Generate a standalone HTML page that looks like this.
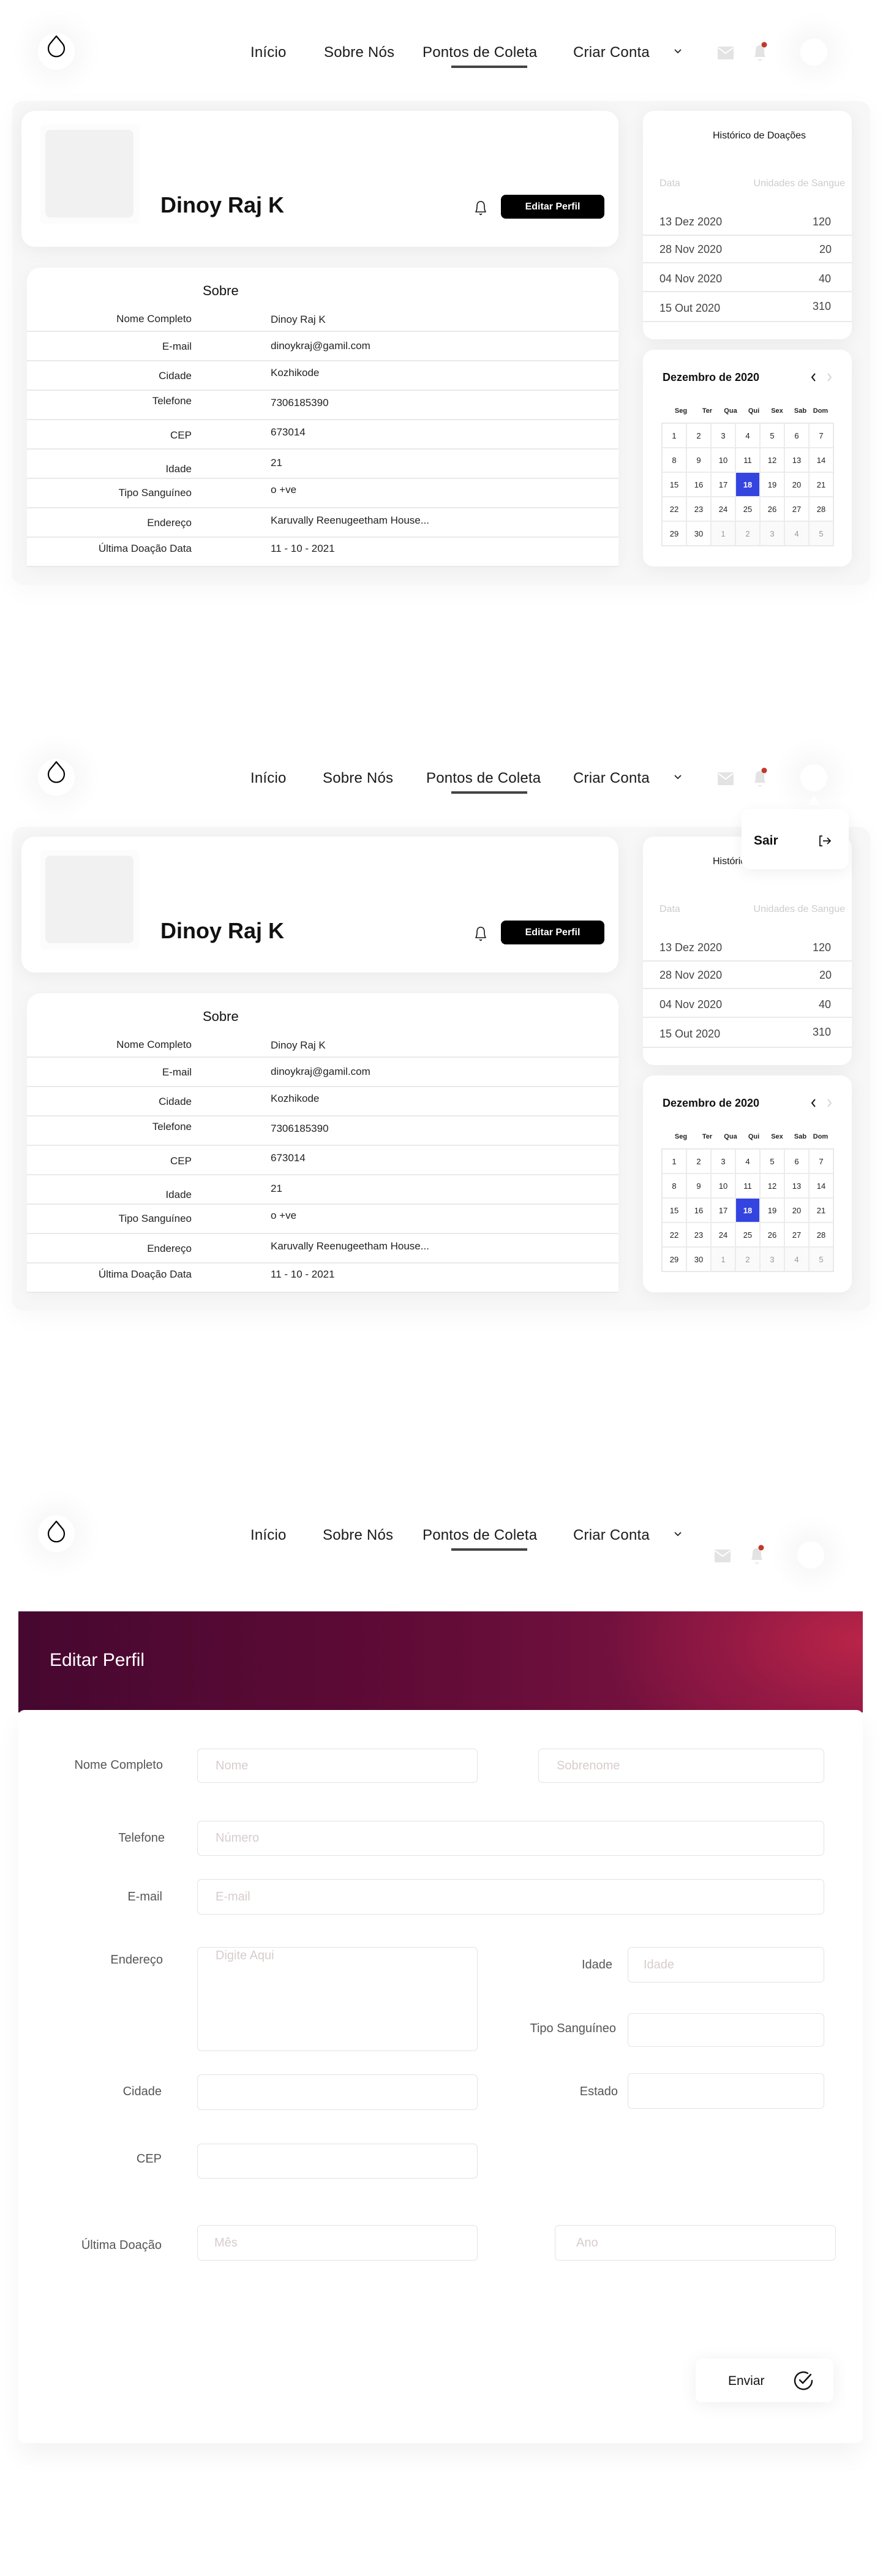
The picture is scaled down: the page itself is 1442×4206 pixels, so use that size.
<!DOCTYPE html>
<html><head><meta charset="utf-8">
<style>
*{box-sizing:border-box;margin:0;padding:0}
body{width:1442px;height:4206px;background:#fff;position:relative;font-family:"Liberation Sans",sans-serif;overflow:hidden;color:#111}
.a{position:absolute}
.sec{position:absolute;left:0;width:1442px;height:1000px}
.logo{left:62px;top:54px;width:60px;height:60px;border-radius:50%;background:#fff;box-shadow:0 0 40px 18px rgba(0,0,0,0.035)}
.nav{font-size:24px;letter-spacing:0.2px;color:#1a1a1a;top:72px;white-space:nowrap}
.ul{left:737px;top:107px;width:124px;height:4px;background:#444}
.av{width:44px;height:44px;border-radius:50%;background:#fff;box-shadow:0 0 40px 20px rgba(0,0,0,0.035)}
.outer{left:20px;top:165px;width:1401px;height:790px;background:#f7f7f7;border-radius:18px;box-shadow:0 10px 40px rgba(0,0,0,0.03)}
.card{background:#fff;border-radius:22px;box-shadow:0 4px 30px rgba(0,0,0,0.06)}
.lbl{font-size:17px;color:#222;text-align:right;width:300px;left:13px;line-height:20px}
.val{font-size:17px;color:#222;left:442px;line-height:20px;white-space:nowrap}
.dv{left:44px;width:966px;height:2px;background:#e9e9e9}
.hr{font-size:18px;color:#444;line-height:20px}
.hd{left:1050px;width:341px;height:2px;background:#e9e9e9}
.wd{font-size:11px;font-weight:bold;color:#222;top:665px;width:40px;text-align:center}
.grid{left:1080px;top:690px;display:grid;grid-template-columns:repeat(7,40px);grid-auto-rows:40px;border:1px solid #e6e6e6}
.grid div{border:1px solid #ececec;font-size:13px;display:flex;align-items:center;justify-content:center;color:#222}
.grid .o{color:#999;background:#fafafa}
.grid .s{background:#3344e0;color:#fff;font-weight:bold}
.fl{font-size:20px;color:#555;text-align:right;line-height:24px}
.in{border:1.5px solid #e2e2e2;border-radius:7px;background:#fff;font-size:20px;color:#d8cccc;padding-left:29px;display:flex;align-items:center}
</style></head><body>

<div class="sec" style="top:0">
 <div class="a logo"></div>
 <svg class="a" style="left:76px;top:57px" width="32" height="40" viewBox="0 0 32 40"><path d="M16 2 L6 14 A13 13 0 1 0 26 14 Z" fill="none" stroke="#000" stroke-width="2.2" stroke-linejoin="round"/></svg>
 <div class="a nav" style="left:409px">Início</div>
 <div class="a nav" style="left:529px">Sobre Nós</div>
 <div class="a nav" style="left:690px">Pontos de Coleta</div>
 <div class="a nav" style="left:936px">Criar Conta</div>
 <svg class="a" style="left:1101px;top:80px" width="12" height="8" viewBox="0 0 12 8"><path d="M1 1l5 5 5-5" fill="none" stroke="#222" stroke-width="1.8"/></svg>
 <div class="a ul"></div>
 <svg class="a" style="left:1172px;top:76px" width="26" height="21" viewBox="0 0 26 21"><rect width="26" height="21" rx="2" fill="#e3e3e3"/><path d="M1 2l12 9 12-9" fill="none" stroke="#fff" stroke-width="2"/></svg>
 <svg class="a" style="left:1229px;top:68px" width="26" height="34" viewBox="0 0 26 34"><path d="M3 25 Q5 22 5 14 Q5 6 12 6 Q19 6 19 14 Q19 22 21 25 Z" fill="#e3e3e3"/><path d="M9 29 L12 31 L15 29" stroke="#e3e3e3" stroke-width="1.5" fill="none"/><circle cx="19" cy="5" r="4.5" fill="#c0392b"/></svg>
 <div class="a av" style="left:1307px;top:63px"></div>

 <div class="a outer"></div>
 <div class="a card" style="left:35px;top:181px;width:975px;height:222px"></div>
 <div class="a" style="left:66px;top:203px;width:162px;height:162px;background:#fcfcfc;border-radius:6px"></div>
 <div class="a" style="left:74px;top:212px;width:144px;height:143px;background:#f1f1f1;border-radius:8px"></div>
 <div class="a" style="left:262px;top:315px;font-size:36px;font-weight:bold;line-height:40px">Dinoy Raj K</div>
 <svg class="a" style="left:774px;top:326px" width="22" height="26" viewBox="0 0 22 26"><path d="M3 20 Q5 17 5 11 Q5 3 11 3 Q17 3 17 11 Q17 17 19 20 Z" fill="none" stroke="#111" stroke-width="1.6" stroke-linejoin="round"/><path d="M9 23 L11 24.5 L13 23" stroke="#111" stroke-width="1.6" fill="none"/></svg>
 <div class="a" style="left:818px;top:318px;width:169px;height:39px;background:#000;border-radius:8px;color:#fff;font-weight:bold;font-size:16px;display:flex;align-items:center;justify-content:center">Editar Perfil</div>

 <div class="a card" style="left:44px;top:437px;width:966px;height:488px;border-radius:22px 22px 0 0;box-shadow:0 4px 30px rgba(0,0,0,0.04)"></div>
 <div class="a" style="left:331px;top:462px;font-size:22px;line-height:26px">Sobre</div>
 <div class="a lbl" style="top:511px">Nome Completo</div><div class="a val" style="top:512px">Dinoy Raj K</div>
 <div class="a dv" style="top:540px"></div>
 <div class="a lbl" style="top:556px">E-mail</div><div class="a val" style="top:555px">dinoykraj@gamil.com</div>
 <div class="a dv" style="top:588px"></div>
 <div class="a lbl" style="top:604px">Cidade</div><div class="a val" style="top:599px">Kozhikode</div>
 <div class="a dv" style="top:636px"></div>
 <div class="a lbl" style="top:645px">Telefone</div><div class="a val" style="top:648px">7306185390</div>
 <div class="a dv" style="top:684px"></div>
 <div class="a lbl" style="top:701px">CEP</div><div class="a val" style="top:696px">673014</div>
 <div class="a dv" style="top:732px"></div>
 <div class="a lbl" style="top:756px">Idade</div><div class="a val" style="top:746px">21</div>
 <div class="a dv" style="top:780px"></div>
 <div class="a lbl" style="top:795px">Tipo Sanguíneo</div><div class="a val" style="top:790px">o +ve</div>
 <div class="a dv" style="top:828px"></div>
 <div class="a lbl" style="top:844px">Endereço</div><div class="a val" style="top:840px">Karuvally Reenugeetham House...</div>
 <div class="a dv" style="top:876px"></div>
 <div class="a lbl" style="top:886px">Última Doação Data</div><div class="a val" style="top:886px">11 - 10 - 2021</div>
 <div class="a dv" style="top:924px"></div>

 <div class="a card" style="left:1050px;top:181px;width:341px;height:373px;border-radius:18px"></div>
 <div class="a" style="left:1050px;top:213px;width:380px;text-align:center;font-size:16px;color:#111">Histórico de Doações</div>
 <div class="a" style="left:1077px;top:291px;font-size:16px;color:#ccc">Data</div>
 <div class="a" style="left:1180px;top:291px;width:200px;text-align:right;font-size:16px;color:#ccc">Unidades de Sangue</div>
 <div class="a hr" style="left:1077px;top:352px">13 Dez 2020</div><div class="a hr" style="left:1257px;width:100px;text-align:right;top:352px">120</div>
 <div class="a hd" style="top:383px"></div>
 <div class="a hr" style="left:1077px;top:397px">28 Nov 2020</div><div class="a hr" style="left:1258px;width:100px;text-align:right;top:397px">20</div>
 <div class="a hd" style="top:428px"></div>
 <div class="a hr" style="left:1077px;top:445px">04 Nov 2020</div><div class="a hr" style="left:1257px;width:100px;text-align:right;top:445px">40</div>
 <div class="a hd" style="top:475px"></div>
 <div class="a hr" style="left:1077px;top:493px">15 Out 2020</div><div class="a hr" style="left:1257px;width:100px;text-align:right;top:490px">310</div>
 <div class="a hd" style="top:524px"></div>

 <div class="a card" style="left:1050px;top:571px;width:341px;height:354px;border-radius:18px"></div>
 <div class="a" style="left:1082px;top:606px;font-size:18px;font-weight:bold">Dezembro de 2020</div>
 <svg class="a" style="left:1324px;top:608px" width="10" height="16" viewBox="0 0 10 16"><path d="M7 2L2 8l5 6" fill="none" stroke="#111" stroke-width="2"/></svg>
 <svg class="a" style="left:1349px;top:608px" width="10" height="16" viewBox="0 0 10 16"><path d="M3 2l5 6-5 6" fill="none" stroke="#ccc" stroke-width="1.6"/></svg>
 <div class="a wd" style="left:1092px">Seg</div><div class="a wd" style="left:1135px">Ter</div><div class="a wd" style="left:1173px">Qua</div><div class="a wd" style="left:1211px">Qui</div><div class="a wd" style="left:1249px">Sex</div><div class="a wd" style="left:1287px">Sab</div><div class="a wd" style="left:1320px">Dom</div>
 <div class="a grid">
  <div>1</div><div>2</div><div>3</div><div>4</div><div>5</div><div>6</div><div>7</div>
  <div>8</div><div>9</div><div>10</div><div>11</div><div>12</div><div>13</div><div>14</div>
  <div>15</div><div>16</div><div>17</div><div class="s">18</div><div>19</div><div>20</div><div>21</div>
  <div>22</div><div>23</div><div>24</div><div>25</div><div>26</div><div>27</div><div>28</div>
  <div>29</div><div>30</div><div class="o">1</div><div class="o">2</div><div class="o">3</div><div class="o">4</div><div class="o">5</div>
 </div>
</div>

<div class="sec" style="top:1185px">
 <div class="a logo"></div>
 <svg class="a" style="left:76px;top:57px" width="32" height="40" viewBox="0 0 32 40"><path d="M16 2 L6 14 A13 13 0 1 0 26 14 Z" fill="none" stroke="#000" stroke-width="2.2" stroke-linejoin="round"/></svg>
 <div class="a nav" style="left:409px">Início</div>
 <div class="a nav" style="left:527px">Sobre Nós</div>
 <div class="a nav" style="left:696px">Pontos de Coleta</div>
 <div class="a nav" style="left:936px">Criar Conta</div>
 <svg class="a" style="left:1101px;top:80px" width="12" height="8" viewBox="0 0 12 8"><path d="M1 1l5 5 5-5" fill="none" stroke="#222" stroke-width="1.8"/></svg>
 <div class="a ul"></div>
 <svg class="a" style="left:1172px;top:76px" width="26" height="21" viewBox="0 0 26 21"><rect width="26" height="21" rx="2" fill="#e3e3e3"/><path d="M1 2l12 9 12-9" fill="none" stroke="#fff" stroke-width="2"/></svg>
 <svg class="a" style="left:1229px;top:68px" width="26" height="34" viewBox="0 0 26 34"><path d="M3 25 Q5 22 5 14 Q5 6 12 6 Q19 6 19 14 Q19 22 21 25 Z" fill="#e3e3e3"/><path d="M9 29 L12 31 L15 29" stroke="#e3e3e3" stroke-width="1.5" fill="none"/><circle cx="19" cy="5" r="4.5" fill="#c0392b"/></svg>
 <div class="a av" style="left:1307px;top:63px"></div>

 <div class="a outer"></div>
 <div class="a card" style="left:35px;top:181px;width:975px;height:222px"></div>
 <div class="a" style="left:66px;top:203px;width:162px;height:162px;background:#fcfcfc;border-radius:6px"></div>
 <div class="a" style="left:74px;top:212px;width:144px;height:143px;background:#f1f1f1;border-radius:8px"></div>
 <div class="a" style="left:262px;top:315px;font-size:36px;font-weight:bold;line-height:40px">Dinoy Raj K</div>
 <svg class="a" style="left:774px;top:326px" width="22" height="26" viewBox="0 0 22 26"><path d="M3 20 Q5 17 5 11 Q5 3 11 3 Q17 3 17 11 Q17 17 19 20 Z" fill="none" stroke="#111" stroke-width="1.6" stroke-linejoin="round"/><path d="M9 23 L11 24.5 L13 23" stroke="#111" stroke-width="1.6" fill="none"/></svg>
 <div class="a" style="left:818px;top:318px;width:169px;height:39px;background:#000;border-radius:8px;color:#fff;font-weight:bold;font-size:16px;display:flex;align-items:center;justify-content:center">Editar Perfil</div>

 <div class="a card" style="left:44px;top:437px;width:966px;height:488px;border-radius:22px 22px 0 0;box-shadow:0 4px 30px rgba(0,0,0,0.04)"></div>
 <div class="a" style="left:331px;top:462px;font-size:22px;line-height:26px">Sobre</div>
 <div class="a lbl" style="top:511px">Nome Completo</div><div class="a val" style="top:512px">Dinoy Raj K</div>
 <div class="a dv" style="top:540px"></div>
 <div class="a lbl" style="top:556px">E-mail</div><div class="a val" style="top:555px">dinoykraj@gamil.com</div>
 <div class="a dv" style="top:588px"></div>
 <div class="a lbl" style="top:604px">Cidade</div><div class="a val" style="top:599px">Kozhikode</div>
 <div class="a dv" style="top:636px"></div>
 <div class="a lbl" style="top:645px">Telefone</div><div class="a val" style="top:648px">7306185390</div>
 <div class="a dv" style="top:684px"></div>
 <div class="a lbl" style="top:701px">CEP</div><div class="a val" style="top:696px">673014</div>
 <div class="a dv" style="top:732px"></div>
 <div class="a lbl" style="top:756px">Idade</div><div class="a val" style="top:746px">21</div>
 <div class="a dv" style="top:780px"></div>
 <div class="a lbl" style="top:795px">Tipo Sanguíneo</div><div class="a val" style="top:790px">o +ve</div>
 <div class="a dv" style="top:828px"></div>
 <div class="a lbl" style="top:844px">Endereço</div><div class="a val" style="top:840px">Karuvally Reenugeetham House...</div>
 <div class="a dv" style="top:876px"></div>
 <div class="a lbl" style="top:886px">Última Doação Data</div><div class="a val" style="top:886px">11 - 10 - 2021</div>
 <div class="a dv" style="top:924px"></div>

 <div class="a card" style="left:1050px;top:181px;width:341px;height:373px;border-radius:18px"></div>
 <div class="a" style="left:1050px;top:213px;width:380px;text-align:center;font-size:16px;color:#111">Histórico de Doações</div>
 <div class="a" style="left:1077px;top:291px;font-size:16px;color:#ccc">Data</div>
 <div class="a" style="left:1180px;top:291px;width:200px;text-align:right;font-size:16px;color:#ccc">Unidades de Sangue</div>
 <div class="a hr" style="left:1077px;top:352px">13 Dez 2020</div><div class="a hr" style="left:1257px;width:100px;text-align:right;top:352px">120</div>
 <div class="a hd" style="top:383px"></div>
 <div class="a hr" style="left:1077px;top:397px">28 Nov 2020</div><div class="a hr" style="left:1258px;width:100px;text-align:right;top:397px">20</div>
 <div class="a hd" style="top:428px"></div>
 <div class="a hr" style="left:1077px;top:445px">04 Nov 2020</div><div class="a hr" style="left:1257px;width:100px;text-align:right;top:445px">40</div>
 <div class="a hd" style="top:475px"></div>
 <div class="a hr" style="left:1077px;top:493px">15 Out 2020</div><div class="a hr" style="left:1257px;width:100px;text-align:right;top:490px">310</div>
 <div class="a hd" style="top:524px"></div>

 <div class="a card" style="left:1050px;top:571px;width:341px;height:354px;border-radius:18px"></div>
 <div class="a" style="left:1082px;top:606px;font-size:18px;font-weight:bold">Dezembro de 2020</div>
 <svg class="a" style="left:1324px;top:608px" width="10" height="16" viewBox="0 0 10 16"><path d="M7 2L2 8l5 6" fill="none" stroke="#111" stroke-width="2"/></svg>
 <svg class="a" style="left:1349px;top:608px" width="10" height="16" viewBox="0 0 10 16"><path d="M3 2l5 6-5 6" fill="none" stroke="#ccc" stroke-width="1.6"/></svg>
 <div class="a wd" style="left:1092px">Seg</div><div class="a wd" style="left:1135px">Ter</div><div class="a wd" style="left:1173px">Qua</div><div class="a wd" style="left:1211px">Qui</div><div class="a wd" style="left:1249px">Sex</div><div class="a wd" style="left:1287px">Sab</div><div class="a wd" style="left:1320px">Dom</div>
 <div class="a grid">
  <div>1</div><div>2</div><div>3</div><div>4</div><div>5</div><div>6</div><div>7</div>
  <div>8</div><div>9</div><div>10</div><div>11</div><div>12</div><div>13</div><div>14</div>
  <div>15</div><div>16</div><div>17</div><div class="s">18</div><div>19</div><div>20</div><div>21</div>
  <div>22</div><div>23</div><div>24</div><div>25</div><div>26</div><div>27</div><div>28</div>
  <div>29</div><div>30</div><div class="o">1</div><div class="o">2</div><div class="o">3</div><div class="o">4</div><div class="o">5</div>
 </div>

 <div class="a" style="left:1319px;top:114px;width:0;height:0;border-left:10px solid transparent;border-right:10px solid transparent;border-bottom:16px solid #fff"></div>
 <div class="a" style="left:1211px;top:136px;width:175px;height:98px;background:#fff;border-radius:14px;box-shadow:0 6px 24px rgba(0,0,0,0.06)"></div>
 <div class="a" style="left:1231px;top:175px;font-size:21px;font-weight:bold;line-height:26px">Sair</div>
 <svg class="a" style="left:1336px;top:178px" width="22" height="20" viewBox="0 0 22 20"><path d="M7 2H3v16h4" fill="none" stroke="#111" stroke-width="1.8" stroke-linejoin="round"/><path d="M8 10h12M15 5l5 5-5 5" fill="none" stroke="#111" stroke-width="1.8"/></svg>
</div>

<div class="a logo" style="top:2474px"></div>
<svg class="a" style="left:76px;top:2482px" width="32" height="40" viewBox="0 0 32 40"><path d="M16 2 L6 14 A13 13 0 1 0 26 14 Z" fill="none" stroke="#000" stroke-width="2.2" stroke-linejoin="round"/></svg>
<div class="a nav" style="left:409px;top:2493px">Início</div>
<div class="a nav" style="left:527px;top:2493px">Sobre Nós</div>
<div class="a nav" style="left:690px;top:2493px">Pontos de Coleta</div>
<div class="a nav" style="left:936px;top:2493px">Criar Conta</div>
<svg class="a" style="left:1101px;top:2501px" width="12" height="8" viewBox="0 0 12 8"><path d="M1 1l5 5 5-5" fill="none" stroke="#222" stroke-width="1.8"/></svg>
<div class="a ul" style="top:2528px"></div>
<svg class="a" style="left:1167px;top:2530px" width="26" height="21" viewBox="0 0 26 21"><rect width="26" height="21" rx="2" fill="#e3e3e3"/><path d="M1 2l12 9 12-9" fill="none" stroke="#fff" stroke-width="2"/></svg>
<svg class="a" style="left:1224px;top:2522px" width="26" height="34" viewBox="0 0 26 34"><path d="M3 25 Q5 22 5 14 Q5 6 12 6 Q19 6 19 14 Q19 22 21 25 Z" fill="#e3e3e3"/><path d="M9 29 L12 31 L15 29" stroke="#e3e3e3" stroke-width="1.5" fill="none"/><circle cx="19" cy="5" r="4.5" fill="#c0392b"/></svg>
<div class="a av" style="left:1302px;top:2517px"></div>

<div class="a" style="left:30px;top:2631px;width:1379px;height:165px;background:radial-gradient(ellipse 500px 260px at 100% 30%, #b92448 0%, rgba(160,28,70,0.6) 45%, rgba(100,12,55,0) 85%),linear-gradient(90deg,#460830 0%,#5c0a35 40%,#6d0f3c 65%,#8d1844 100%)"></div>
<div class="a" style="left:81px;top:2693px;font-size:30px;color:#fff;line-height:36px">Editar Perfil</div>
<div class="a" style="left:30px;top:2792px;width:1379px;height:1197px;background:#fff;border-radius:10px;box-shadow:0 20px 40px rgba(0,0,0,0.05)"></div>

<div class="a fl" style="left:40px;width:226px;top:2870px">Nome Completo</div>
<div class="a in" style="left:322px;top:2855px;width:458px;height:56px">Nome</div>
<div class="a in" style="left:879px;top:2855px;width:467px;height:56px">Sobrenome</div>
<div class="a fl" style="left:40px;width:229px;top:2989px">Telefone</div>
<div class="a in" style="left:322px;top:2973px;width:1024px;height:57px">Número</div>
<div class="a fl" style="left:40px;width:225px;top:3085px">E-mail</div>
<div class="a in" style="left:322px;top:3068px;width:1024px;height:58px">E-mail</div>
<div class="a fl" style="left:40px;width:226px;top:3188px">Endereço</div>
<div class="a in" style="left:322px;top:3179px;width:458px;height:170px;align-items:flex-start;padding-top:2px">Digite Aqui</div>
<div class="a fl" style="left:700px;width:300px;top:3196px">Idade</div>
<div class="a in" style="left:1025px;top:3179px;width:321px;height:58px;padding-left:25px">Idade</div>
<div class="a fl" style="left:700px;width:306px;top:3300px">Tipo Sanguíneo</div>
<div class="a in" style="left:1025px;top:3287px;width:321px;height:55px"></div>
<div class="a fl" style="left:40px;width:224px;top:3403px">Cidade</div>
<div class="a in" style="left:322px;top:3387px;width:458px;height:58px"></div>
<div class="a fl" style="left:700px;width:309px;top:3403px">Estado</div>
<div class="a in" style="left:1025px;top:3385px;width:321px;height:58px"></div>
<div class="a fl" style="left:40px;width:224px;top:3513px">CEP</div>
<div class="a in" style="left:322px;top:3500px;width:458px;height:57px"></div>
<div class="a fl" style="left:40px;width:224px;top:3654px">Última Doação</div>
<div class="a in" style="left:322px;top:3633px;width:458px;height:58px;padding-left:27px">Mês</div>
<div class="a in" style="left:906px;top:3633px;width:459px;height:58px;padding-left:34px">Ano</div>

<div class="a" style="left:1136px;top:3851px;width:225px;height:71px;background:#fff;border-radius:10px;box-shadow:0 4px 30px rgba(0,0,0,0.07)"></div>
<div class="a" style="left:1189px;top:3876px;font-size:21px;color:#111;line-height:24px">Enviar</div>
<svg class="a" style="left:1293px;top:3868px" width="38" height="38" viewBox="0 0 38 38"><path d="M33 19 A14 14 0 1 1 26 7" fill="none" stroke="#111" stroke-width="2.4" stroke-linecap="round"/><path d="M13 18l5 5 13-14" fill="none" stroke="#111" stroke-width="2.4" stroke-linecap="round" stroke-linejoin="round"/></svg>
</body></html>
